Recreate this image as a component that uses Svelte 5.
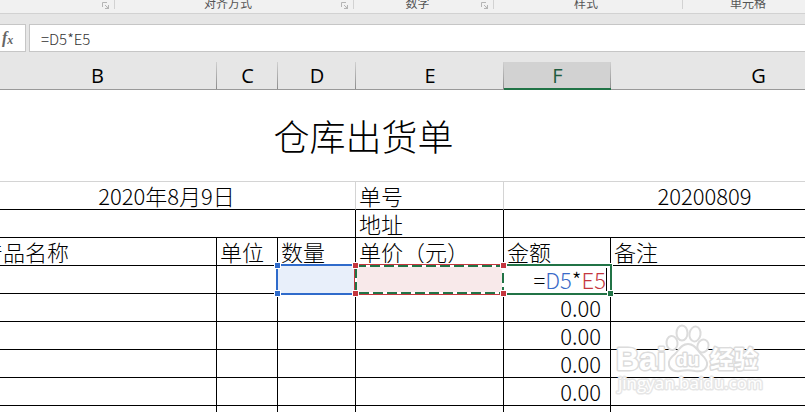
<script>
	let formula = $state('=D5*E5');

	const groups = [
		{ label: '', launcher: true },
		{ label: '对齐方式', launcher: true },
		{ label: '数字', launcher: true },
		{ label: '样式', launcher: false },
		{ label: '单元格', launcher: false }
	];

	const columns = ['A', 'B', 'C', 'D', 'E', 'F', 'G'];
	const active = 'F';
	const amounts = ['0.00', '0.00', '0.00', '0.00', '0.00'];

	// splits a formula into operators and cell references
	let tokens = $derived(formula.match(/[A-Z]+\d+|[^A-Z]+/g) ?? []);

	function tokenClass(token) {
		if (token === 'D5') return 'ref-blue';
		if (token === 'E5') return 'ref-red';
		return '';
	}
</script>

<div class="app">
	<div class="ribbon">
		{#each groups as group}
			<div class="group">
				<span class="group-label">{group.label}</span>
				{#if group.launcher}
					<button class="launcher" aria-label="对话框启动器">
						<svg width="7" height="7" viewBox="0 0 7 7">
							<path d="M0.5 5V0.5H5M3 3l3 3M6.5 3v3.5H3" />
							<path class="corner" d="M7 3.5V7H3.5z" />
						</svg>
					</button>
				{/if}
			</div>
		{/each}
	</div>

	<div class="formula-bar">
		<button class="fx" aria-label="插入函数"><i>f</i><i class="sub">x</i></button>
		<input class="formula" aria-label="编辑栏" bind:value={formula} />
	</div>

	<div class="sheet">
		<table>
			<colgroup>
				{#each columns as name}
					<col class="col-{name.toLowerCase()}" />
				{/each}
			</colgroup>
			<thead>
				<tr>
					{#each columns as name}
						<th class:active={name === active}>{name}</th>
					{/each}
				</tr>
			</thead>
			<tbody>
				<tr class="title-row">
					<td colspan="7" class="title">仓库出货单</td>
				</tr>
				<tr class="light">
					<td></td>
					<td colspan="3" class="center">2020年8月9日</td>
					<td>单号</td>
					<td colspan="2" class="center">20200809</td>
				</tr>
				<tr>
					<td></td>
					<td colspan="3"></td>
					<td>地址</td>
					<td colspan="2"></td>
				</tr>
				<tr>
					<td></td>
					<td>产品名称</td>
					<td>单位</td>
					<td>数量</td>
					<td>单价（元）</td>
					<td>金额</td>
					<td>备注</td>
				</tr>
				<tr>
					<td></td>
					<td></td>
					<td></td>
					<td class="anchor">
						<svg class="ranges" width="344" height="36" viewBox="274 262 344 36">
							<!-- D5 -->
							<rect class="gap" x="277" y="265" width="78" height="29" />
							<rect class="blue-range" x="277" y="265" width="78" height="29" />
							<!-- E5 -->
							<rect class="gap" x="356" y="265" width="147" height="29" />
							<rect class="red-range" x="354.5" y="264.5" width="149" height="30" />
							<rect class="ants-bg" x="356" y="266" width="147" height="27" />
							<rect class="ants" x="356" y="266" width="147" height="27" />
							<!-- F5 -->
							<path class="gap" d="M504 265H611V294H504" />
							<path class="green-range" d="M504 265H611V294H504" />
							{#each [265, 293] as y}
								<rect class="handle blue" x="274.5" y={y - 2.5} width="6" height="6" />
								<rect class="handle red" x="352.5" y={y - 2.5} width="6" height="6" />
								<rect class="handle red" x="500.5" y={y - 2.5} width="6" height="6" />
							{/each}
							<rect class="handle green" x="607.5" y="290.5" width="6" height="6" />
						</svg>
					</td>
					<td></td>
					<td>
						<div class="editing">
							{#each tokens as token}<span class={tokenClass(token)}>{token}</span>{/each}<span class="caret"></span>
						</div>
					</td>
					<td></td>
				</tr>
				{#each amounts as amount}
					<tr>
						<td></td>
						<td></td>
						<td></td>
						<td></td>
						<td></td>
						<td class="number">{amount}</td>
						<td></td>
					</tr>
				{/each}
			</tbody>
		</table>
	</div>

	<svg class="watermark" width="152" height="76" viewBox="0 0 152 76">
		<text class="brand" x="1" y="47" font-size="32">Bai</text>
		<path d="M73 21c-7 0-9 6-13 10-4 3-7 7-6 11 1 5 6 7 11 6 5-1 10-1 15 0 6 1 11-1 12-6 1-5-3-8-6-11-4-4-6-10-13-10z" />
		<ellipse cx="57" cy="20" rx="5.5" ry="7" transform="rotate(-8 57 20)" />
		<ellipse cx="67" cy="10" rx="5.5" ry="7.5" />
		<ellipse cx="80" cy="11" rx="5.5" ry="7.5" transform="rotate(10 80 11)" />
		<ellipse cx="88" cy="23" rx="5.5" ry="6.5" transform="rotate(20 88 23)" />
		<text class="brand" x="61" y="43" font-size="19">du</text>
		<text class="brand" x="95" y="45" font-size="24">经验</text>
		<text class="url" x="3" y="66" font-size="17">jingyan.baidu.com</text>
	</svg>
</div>

<style>
	:global(body) {
		margin: 0;
	}

	.app {
		position: relative;
		height: 100vh;
		overflow: hidden;
		background: #fff;
		font-family: "Noto Sans CJK SC", sans-serif;
		color: #000;
	}

	.ribbon {
		display: grid;
		grid-template-columns: 115px 239px 140px 189px 135px;
		grid-template-rows: 13px;
		align-items: end;
		height: 13px;
		overflow: hidden;
		background: #f1f1f1;
		border-bottom: 1px solid #d2d2d2;
	}

	.group {
		display: flex;
		align-items: flex-end;
		box-sizing: border-box;
		height: 20px;
		padding-right: 4px;
		border-right: 1px solid #d2d2d2;
		margin-bottom: 4px;
	}

	.group-label {
		flex: 1;
		font-size: 12px;
		line-height: 12px;
		text-align: center;
		color: #555;
	}

	.launcher {
		display: flex;
		width: 8px;
		height: 7px;
		padding: 0;
		border: 0;
		background: none;
	}

	.launcher path {
		fill: none;
		stroke: #b4b4b4;
	}

	.launcher .corner {
		fill: #b4b4b4;
		stroke: none;
	}

	.formula-bar {
		display: flex;
		gap: 3px;
		height: 28px;
		padding: 10px 0;
		background: #e6e6e6;
	}

	.fx,
	.formula {
		box-sizing: border-box;
		height: 28px;
		background: #fff;
		border: 1px solid #c6c6c6;
		border-radius: 0;
	}

	.fx {
		display: flex;
		align-items: center;
		width: 26px;
		padding: 0 0 0 2px;
		border-left: 0;
		font-family: "Liberation Serif", serif;
		font-size: 16px;
		font-weight: bold;
		color: #666;
	}

	.fx .sub {
		font-size: 12px;
		padding-top: 4px;
	}

	.formula {
		flex: 1;
		min-width: 0;
		padding: 0 11px;
		border-right: 0;
		outline: 0;
		font-family: "Noto Sans CJK SC", sans-serif;
		font-size: 15px;
		font-weight: 300;
		color: #333;
	}

	.sheet {
		overflow: hidden;
	}

	/* scrolled right, so A is out of view and B is cut */
	table {
		width: 1084px;
		margin-left: -178px;
		table-layout: fixed;
		border-collapse: separate;
		border-spacing: 0;
	}

	.col-a { width: 156px; }
	.col-b { width: 239px; }
	.col-c { width: 61px; }
	.col-d { width: 78px; }
	.col-e { width: 148px; }
	.col-f { width: 107px; }
	.col-g { width: 295px; }

	th {
		box-sizing: border-box;
		height: 28px;
		padding: 0;
		background: linear-gradient(#d0d0d0, #8c8c8c) right / 1px 100% no-repeat #e6e6e6;
		border-bottom: 1px solid #999;
		font-family: "Open Sans", sans-serif;
		font-size: 20px;
		font-weight: 400;
		line-height: 26px;
	}

	th.active {
		background-color: #d2d2d2;
		border-bottom: 2px solid #217346;
		color: #1f5c40;
		line-height: 25px;
	}

	td {
		box-sizing: border-box;
		height: 28px;
		padding: 0 3px;
		border-right: 1px solid #000;
		border-bottom: 1px solid #000;
		font-size: 22px;
		font-weight: 300;
		line-height: 27px;
		white-space: nowrap;
	}

	.title-row td {
		height: 92px;
		border-bottom-color: #d4d4d4;
		font-size: 36px;
		text-align: center;
	}

	.light td {
		border-right-color: #d4d4d4;
	}

	.center {
		text-align: center;
	}

	.number {
		padding-right: 9px;
		text-align: right;
	}

	.editing {
		display: flex;
		justify-content: flex-end;
		align-items: center;
		height: 27px;
	}

	.caret {
		width: 1px;
		height: 23px;
		background: #000;
	}

	.ref-blue {
		color: #3a6bc8;
	}

	.ref-red {
		color: #c4373f;
	}

	.anchor {
		position: relative;
	}

	.ranges {
		position: absolute;
		top: -4px;
		left: -4px;
		z-index: 1;
	}

	.ranges .gap {
		fill: none;
		stroke: #fff;
		stroke-width: 4;
	}

	.blue-range {
		fill: #e8effa;
		stroke: #2f6bcb;
		stroke-width: 2;
	}

	.red-range {
		fill: #f8e9ea;
		stroke: #c4373f;
	}

	.ants-bg {
		fill: none;
		stroke: #fff;
		stroke-width: 2;
	}

	.ants {
		fill: none;
		stroke: #217346;
		stroke-width: 2;
		stroke-dasharray: 10 4;
	}

	.green-range {
		fill: none;
		stroke: #217346;
		stroke-width: 2;
	}

	.handle {
		stroke: #fff;
	}

	.blue { fill: #2f6bcb; }
	.red { fill: #c4373f; }
	.green { fill: #217346; }

	.watermark {
		position: absolute;
		right: 38px;
		bottom: 13px;
		z-index: 2;
		overflow: visible;
		fill: #fff;
		stroke: #dcdcdc;
		stroke-width: 2;
		stroke-linejoin: round;
	}

	.watermark text {
		paint-order: stroke;
		stroke-width: 3;
	}

	.brand {
		font-family: "Liberation Sans", "Noto Sans CJK SC", sans-serif;
		font-weight: 700;
	}

	.url {
		font-family: "Open Sans", sans-serif;
		font-weight: 400;
		stroke: #e6e6e6;
	}
</style>
